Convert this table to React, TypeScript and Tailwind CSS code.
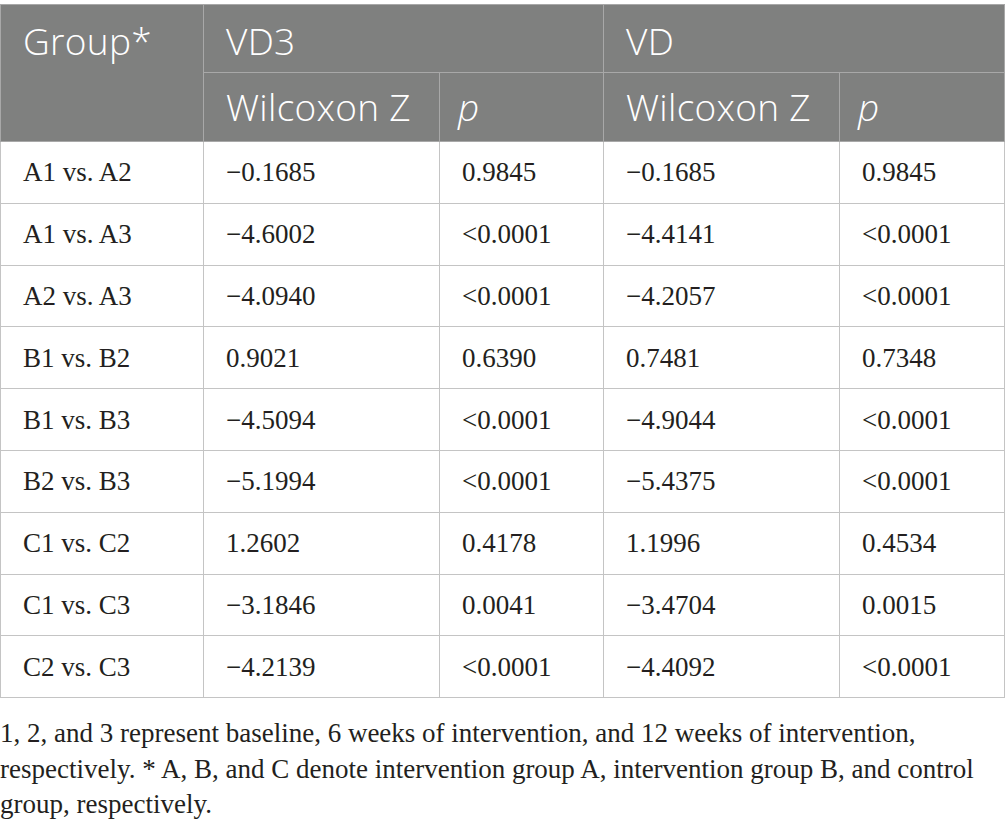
import React from "react";

const rows: [string, string, string, string, string][] = [
  ["A1 vs. A2", "\u22120.1685", "0.9845", "\u22120.1685", "0.9845"],
  ["A1 vs. A3", "\u22124.6002", "<0.0001", "\u22124.4141", "<0.0001"],
  ["A2 vs. A3", "\u22124.0940", "<0.0001", "\u22124.2057", "<0.0001"],
  ["B1 vs. B2", "0.9021", "0.6390", "0.7481", "0.7348"],
  ["B1 vs. B3", "\u22124.5094", "<0.0001", "\u22124.9044", "<0.0001"],
  ["B2 vs. B3", "\u22125.1994", "<0.0001", "\u22125.4375", "<0.0001"],
  ["C1 vs. C2", "1.2602", "0.4178", "1.1996", "0.4534"],
  ["C1 vs. C3", "\u22123.1846", "0.0041", "\u22123.4704", "0.0015"],
  ["C2 vs. C3", "\u22124.2139", "<0.0001", "\u22124.4092", "<0.0001"],
];

const head = "border border-[#a8a8a8] px-[22px] text-left align-top font-light";
const cell = "border border-[#c4c4c4] px-[22px] text-left align-middle";

export default function App() {
  return (
    <div className="w-[1005px] bg-white pt-[4px]">
      <table
        className="w-[1004px] table-fixed border-collapse"
        style={{ fontFamily: '"Liberation Serif", serif' }}
      >
        <colgroup>
          <col className="w-[203px]" />
          <col className="w-[236px]" />
          <col className="w-[164px]" />
          <col className="w-[236px]" />
          <col className="w-[165px]" />
        </colgroup>
        <thead
          className="bg-[#7f807f] text-white text-[37px] leading-[44px] tracking-[0.3px]"
          style={{ fontFamily: '"Open Sans", sans-serif' }}
        >
          <tr className="h-[68px]">
            <th rowSpan={2} className={`${head} pt-[14px]`}>
              Group*
            </th>
            <th colSpan={2} className={`${head} pt-[14px]`}>
              VD3
            </th>
            <th colSpan={2} className={`${head} pt-[14px]`}>
              VD
            </th>
          </tr>
          <tr className="h-[69px]">
            <th className={`${head} pt-[12px]`}>Wilcoxon Z</th>
            <th className={`${head} pt-[12px] pl-[18px] italic`}>p</th>
            <th className={`${head} pt-[12px]`}>Wilcoxon Z</th>
            <th className={`${head} pt-[12px] pl-[18px] italic`}>p</th>
          </tr>
        </thead>
        <tbody className="text-[27px] leading-[32px] text-[#231f20]">
          {rows.map((r) => (
            <tr key={r[0]} className="h-[61.8px]">
              {r.map((v, i) => (
                <td key={i} className={cell}>
                  {v}
                </td>
              ))}
            </tr>
          ))}
        </tbody>
      </table>
      <p
        className="mt-[18px] text-[27px] leading-[35.5px] text-[#231f20]"
        style={{ fontFamily: '"Liberation Serif", serif' }}
      >
        1, 2, and 3 represent baseline, 6 weeks of intervention, and 12 weeks of
        intervention, respectively. * A, B, and C denote intervention group A,
        intervention group B, and control group, respectively.
      </p>
    </div>
  );
}
